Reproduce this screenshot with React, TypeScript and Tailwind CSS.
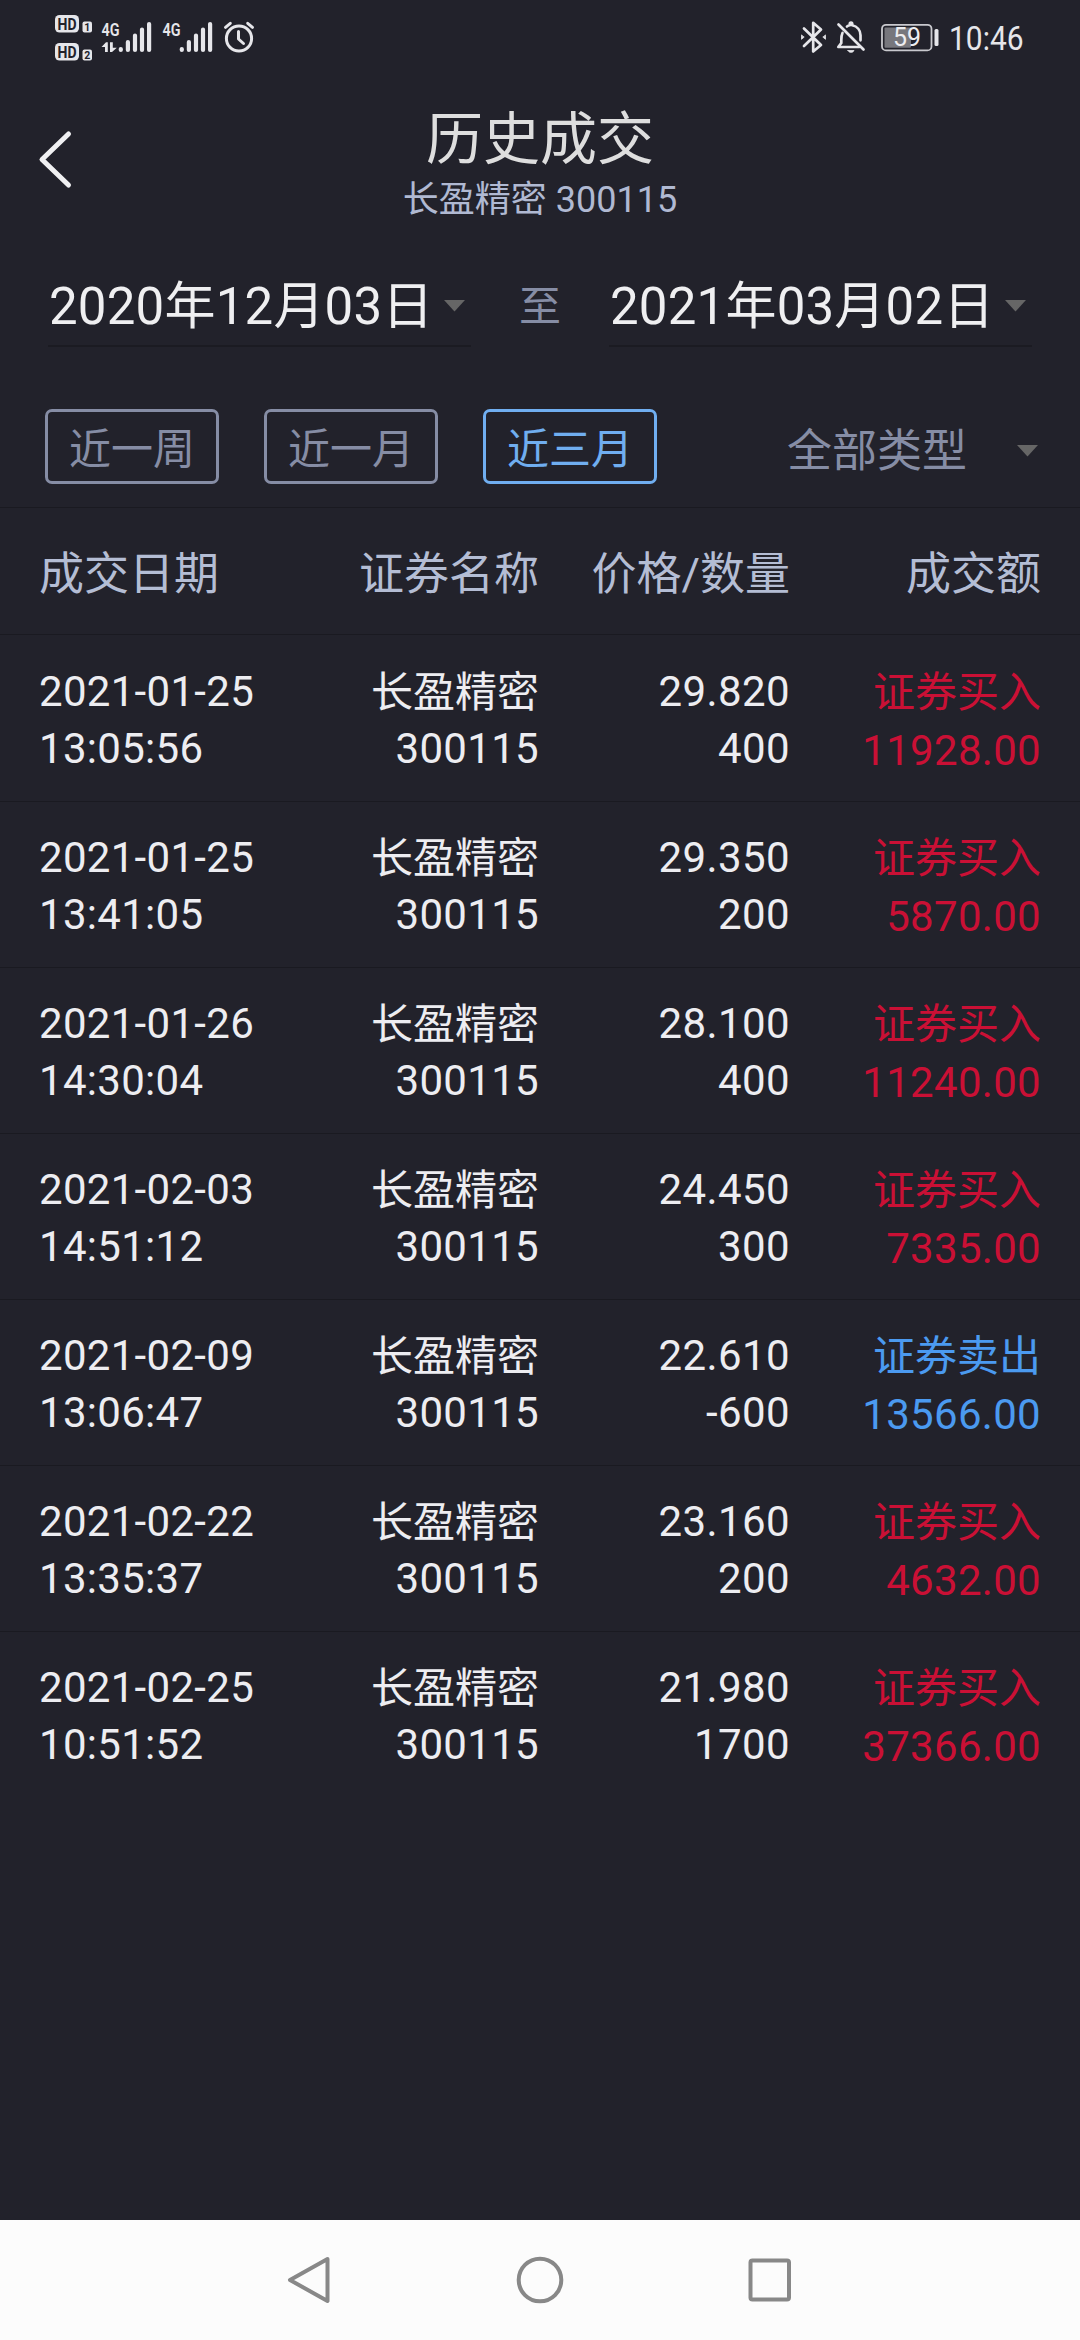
import clsx from "clsx";

type Trade = {
  date: string;
  time: string;
  price: string;
  count: string;
  type: string;
  amount: string;
};

const trades: Trade[] = [
  { date: "2021-01-25", time: "13:05:56", price: "29.820", count: "400", type: "证券买入", amount: "11928.00" },
  { date: "2021-01-25", time: "13:41:05", price: "29.350", count: "200", type: "证券买入", amount: "5870.00" },
  { date: "2021-01-26", time: "14:30:04", price: "28.100", count: "400", type: "证券买入", amount: "11240.00" },
  { date: "2021-02-03", time: "14:51:12", price: "24.450", count: "300", type: "证券买入", amount: "7335.00" },
  { date: "2021-02-09", time: "13:06:47", price: "22.610", count: "-600", type: "证券卖出", amount: "13566.00" },
  { date: "2021-02-22", time: "13:35:37", price: "23.160", count: "200", type: "证券买入", amount: "4632.00" },
  { date: "2021-02-25", time: "10:51:52", price: "21.980", count: "1700", type: "证券买入", amount: "37366.00" },
];

const ranges = ["近一周", "近一月", "近三月"];

const HdBadge = ({ y, sim }: { y: number; sim: string }) => (
  <g>
    <rect x="55" y={y} width="24" height="17.5" rx="4.5" fill="#e6e6ea" />
    <text x="57.5" y={y + 14.5} fontSize="16" fontWeight="700" textLength="19" lengthAdjust="spacingAndGlyphs" fill="#22222b">HD</text>
    <rect x="82.5" y={y + 6.5} width="9.5" height="11" rx="2" fill="#e6e6ea" />
    <text x="87.2" y={y + 15.8} fontSize="10.5" fontWeight="700" textAnchor="middle" fill="#22222b">{sim}</text>
  </g>
);

const Signal = ({ x }: { x: number }) => (
  <g stroke="#e6e6ea" strokeWidth="4.2" strokeLinecap="round">
    <text x={x} y="35.5" fontSize="19" fontWeight="600" textLength="18" lengthAdjust="spacingAndGlyphs" fill="#e6e6ea" stroke="none">4G</text>
    <path d={`M${x + 19.3} 49v1M${x + 26.4} 42v8M${x + 33.5} 35.5v14.5M${x + 40.5} 29.5v20.5M${x + 47.6} 24v26`} />
  </g>
);

const StatusBar = () => (
  <div className="flex h-[80px] items-start justify-between pl-[50px] pr-[51px] text-[#e6e6ea]">
    <svg width="220" height="76" viewBox="50 0 220 76">
      <HdBadge y={15} sim="1" />
      <HdBadge y={43} sim="2" />
      <Signal x={101.5} />
      <path d="M101.5 47L106 42.2h1.8v9.8h-2.8v-5zM110 42.2h2.8v5.5h4L112 52h-2z" fill="#e6e6ea" />
      <Signal x={162.5} />
      <g fill="none" stroke="#e6e6ea" strokeWidth="3" strokeLinecap="round" strokeLinejoin="round">
        <circle cx="239" cy="38.5" r="12.6" />
        <path d="M238.5 31.5v7.5l5 4.5" />
        <path d="M225.5 27.3l4.8-4M252.5 27.3l-4.8-4" />
      </g>
    </svg>
    <div className="flex h-[76px] items-center gap-[5px]">
      <svg width="148" height="76" viewBox="796 0 148 76" className="shrink-0">
        <g fill="none" stroke="#e6e6ea" strokeWidth="2.7" strokeLinejoin="round" strokeLinecap="round">
          <path d="M804 28.5l17 16.5-7.8 6.5V22.8l7.8 6.7-17 16.5" />
          <path d="M801.5 35.3v4l2.4-2zM825.5 35.3v4l-2.4-2z" fill="#e6e6ea" strokeWidth="0.8" />
          <path d="M838.5 24.5l25 25" />
          <path d="M842.5 33c-1 2-1.2 4-1.2 7v3l-3 4h21" />
          <path d="M847 26.5c1-.7 1.8-1 2.8-1.2v-1.6c0-1 .4-1.2 1.2-1.2s1.2.4 1.2 1.2v1.6c5 1 8.3 5 8.3 10v5" />
          <path d="M848 50.5h6c-.6 1.3-1.5 1.8-3 1.8s-2.4-.5-3-1.8z" fill="#e6e6ea" strokeWidth="0.8" />
        </g>
        <rect x="882" y="24.8" width="49.5" height="25.6" rx="4" fill="none" stroke="#c9c9ce" strokeWidth="1.8" />
        <rect x="884.5" y="27.5" width="26.5" height="20.3" rx="1" fill="#77777d" />
        <rect x="934.5" y="29" width="4" height="17" rx="1.5" fill="#e6e6ea" />
        <text x="893" y="46" fontSize="25" textLength="28" lengthAdjust="spacingAndGlyphs" fill="#ededf0">59</text>
      </svg>
      <span className="w-[80px] origin-left scale-x-[0.88] text-[34px] leading-none">10:46</span>
    </div>
  </div>
);

const Caret = () => (
  <svg width="21" height="12" viewBox="0 0 21 12" className="shrink-0">
    <path d="M0 0h21L10.5 11.5z" fill="#666666" />
  </svg>
);

const Header = () => (
  <header className="flex h-[160px] items-start justify-between px-[36px]">
    <svg width="40" height="64" viewBox="0 0 40 64" className="mt-[48px]">
      <path d="M32.5 6L6 31.5L32.5 57" fill="none" stroke="#f0f0f2" strokeWidth="5" strokeLinecap="round" strokeLinejoin="round" />
    </svg>
    <div className="flex flex-col items-center pt-[25px]">
      <h1 className="text-[57px] leading-[70px] text-[#dedede]">历史成交</h1>
      <p className="mt-[3px] text-[36px] leading-[44px] text-[#b0b9d2]">长盈精密 300115</p>
    </div>
    <div className="w-[40px]" />
  </header>
);

const DateField = ({ value }: { value: string }) => (
  <div className="flex h-[90px] w-[423px] items-center justify-between border-b-2 border-[#1b1b22] pt-[10px] pr-[6px] pl-px">
    <span className="text-[51px] leading-none tracking-[0.2px] text-[#efeff1]">{value}</span>
    <Caret />
  </div>
);

const Filters = () => (
  <section className="border-b border-[#1a1a21]">
    <div className="flex items-center justify-between px-[48px] pt-[17px]">
      <DateField value="2020年12月03日" />
      <span className="pt-[9px] text-[42px] leading-none text-[#868da5]">至</span>
      <DateField value="2021年03月02日" />
    </div>
    <div className="flex h-[160px] items-start justify-between pt-[62px] pr-[42px] pl-[45px]">
      <div className="flex gap-[45px]">
        {ranges.map((label) => (
          <button
            key={label}
            className={clsx(
              "flex h-[75px] w-[174px] items-center justify-center rounded-[7px] border-[3px] pt-[6px] text-[42px] leading-none",
              label === "近三月" ? "border-[#70aef0] text-[#70aef0]" : "border-[#868da5] text-[#868da5]"
            )}
          >
            {label}
          </button>
        ))}
      </div>
      <div className="flex h-[84px] items-center gap-[50px]">
        <span className="text-[45px] leading-none text-[#868da5]">全部类型</span>
        <Caret />
      </div>
    </div>
  </section>
);

const TradeRow = ({ trade }: { trade: Trade }) => (
  <div className="grid h-[166px] grid-cols-[250px_251px_250px_251px] border-b border-[#1a1a21] pt-[27px] pl-[39px] text-right text-[42px] leading-[57px] text-[#ededf1] last:border-b-0">
    <div className="text-left tracking-[0.3px]">
      <p>{trade.date}</p>
      <p>{trade.time}</p>
    </div>
    <div className="pr-px">
      <p className="relative top-px">长盈精密</p>
      <p className="tracking-[0.3px]">300115</p>
    </div>
    <div className="tracking-[0.4px]">
      <p>{trade.price}</p>
      <p>{trade.count}</p>
    </div>
    <div className={trade.type === "证券卖出" ? "text-[#4b9af0]" : "text-[#ca1035]"}>
      <p className="relative top-px">{trade.type}</p>
      <p className="mt-0.5 tracking-[0.3px]">{trade.amount}</p>
    </div>
  </div>
);

const NavBar = () => (
  <nav className="flex h-[120px] items-center justify-center gap-[180px] bg-[#fcfcfc]">
    <svg width="50" height="50" viewBox="0 0 50 50" fill="none" stroke="#888888" strokeWidth="4" strokeLinejoin="round">
      <path d="M42.5 4L5 25L42.5 46z" />
    </svg>
    <svg width="50" height="50" viewBox="0 0 50 50" fill="none" stroke="#888888" strokeWidth="4">
      <circle cx="25" cy="25" r="21.3" />
    </svg>
    <svg width="50" height="50" viewBox="0 0 50 50" fill="none" stroke="#888888" strokeWidth="4">
      <rect x="5.5" y="5.5" width="38.5" height="39" rx="2" />
    </svg>
  </nav>
);

const App = () => {
  return (
    <div className="flex h-[2340px] w-[1080px] flex-col overflow-hidden bg-[#22222b] font-['Roboto','Noto_Sans_CJK_SC',sans-serif]">
      <StatusBar />
      <Header />
      <Filters />
      <main className="flex-1">
        <div className="mb-px grid h-[127px] grid-cols-[249px_251px_251px_251px] items-center border-b border-[#1a1a21] pt-[6px] pl-[39px] text-right text-[45px] leading-none text-[#b4bdd4]">
          <span className="text-left">成交日期</span>
          <span>证券名称</span>
          <span>价格/数量</span>
          <span>成交额</span>
        </div>
        {trades.map((trade) => (
          <TradeRow key={trade.date + trade.time} trade={trade} />
        ))}
      </main>
      <NavBar />
    </div>
  );
};

export default App;
